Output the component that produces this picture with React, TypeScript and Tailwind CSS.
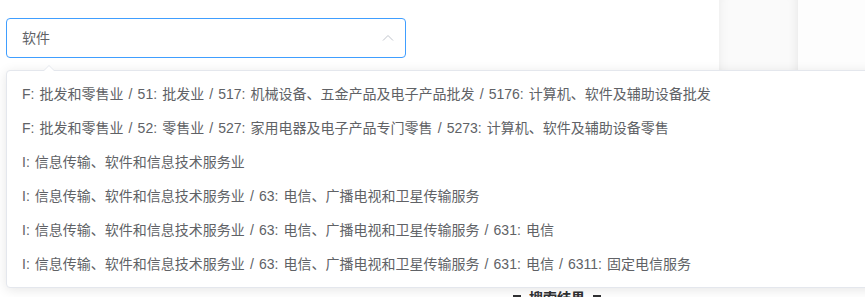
import React from 'react';

const suggestions = [
  'F: 批发和零售业 / 51: 批发业 / 517: 机械设备、五金产品及电子产品批发 / 5176: 计算机、软件及辅助设备批发',
  'F: 批发和零售业 / 52: 零售业 / 527: 家用电器及电子产品专门零售 / 5273: 计算机、软件及辅助设备零售',
  'I: 信息传输、软件和信息技术服务业',
  'I: 信息传输、软件和信息技术服务业 / 63: 电信、广播电视和卫星传输服务',
  'I: 信息传输、软件和信息技术服务业 / 63: 电信、广播电视和卫星传输服务 / 631: 电信',
  'I: 信息传输、软件和信息技术服务业 / 63: 电信、广播电视和卫星传输服务 / 631: 电信 / 6311: 固定电信服务',
];

const font = { fontFamily: '"Liberation Sans", "Noto Sans CJK SC", sans-serif' };

export default function App() {
  return (
    <div className="relative w-[865px] h-[297px] overflow-hidden bg-white" style={font}>
      <div className="flex h-[72px]">
        <div className="w-[719px] pt-[18px] pl-[6px]">
          {/* search input, focused */}
          <div className="flex items-center w-[400px] h-[40px] rounded-[4px] border border-[#409eff] bg-white pl-[15px] pr-[11px]">
            <span className="flex-1 text-[14px] text-[#606266]">软件</span>
            <svg width="12" height="8" viewBox="0 0 12 8" fill="none">
              <path d="M1 6.5L6 1.5L11 6.5" stroke="#c0c4cc" strokeWidth="1" />
            </svg>
          </div>
        </div>
        <div className="w-[79px] bg-[#fafafa] shadow-[inset_10px_0_10px_-8px_rgba(0,0,0,0.05),inset_-10px_0_10px_-8px_rgba(0,0,0,0.07)]" />
        <div className="flex-1 bg-[#fdfdfd]" />
      </div>

      {/* section title, mostly below the fold */}
      <div className="flex items-start gap-[8px] pt-[219px] pl-[513px]">
        <span className="mt-[4px] w-[8px] h-[2px] bg-[#303133]" />
        <span className="text-[14px] font-bold leading-none text-[#303133]">搜索结果</span>
        <span className="mt-[4px] w-[8px] h-[2px] bg-[#303133]" />
      </div>

      {/* suggestion popper */}
      <div className="absolute left-[6px] top-[70px] w-[900px] rounded-[4px] border border-[#e4e7ed] bg-white shadow-[0_2px_12px_0_rgba(0,0,0,0.1)]">
        <div className="absolute -top-[6px] left-[36px] w-0 h-0 border-x-[6px] border-x-transparent border-b-[6px] border-b-[#e4e7ed]" />
        <div className="absolute -top-[5px] left-[37px] w-0 h-0 border-x-[5px] border-x-transparent border-b-[5px] border-b-white" />
        <ul className="py-[6px]">
          {suggestions.map((s) => (
            <li key={s} className="h-[34px] leading-[34px] pl-[15px] text-[14px] text-[#606266] whitespace-nowrap [word-spacing:1.2px]">
              {s}
            </li>
          ))}
        </ul>
      </div>
    </div>
  );
}
